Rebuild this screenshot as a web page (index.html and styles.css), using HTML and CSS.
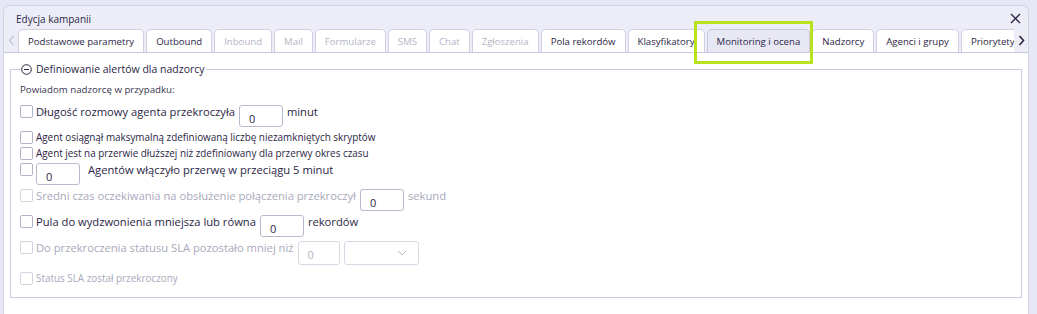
FILE: index.html
```html
<!DOCTYPE html>
<html lang="pl">
<head>
  <meta charset="UTF-8">
  <title>Edycja kampanii</title>
  <link rel="stylesheet" href="styles.css">
</head>
<body>

<div class="dialog">
  <div class="dialog-head">
    <span class="dialog-title">Edycja kampanii</span>
    <button class="close" aria-label="Zamknij">
      <svg width="11" height="11" viewBox="0 0 11 11"><path d="M1 1 L10 10 M10 1 L1 10" stroke="#2b2645" stroke-width="1.3" fill="none"/></svg>
    </button>
  </div>

  <div class="tabbar">
    <span class="arrow arrow-left">
      <svg width="7" height="11" viewBox="0 0 7 11"><path d="M5.5 1 L1.5 5.5 L5.5 10" stroke="#c3c3d3" stroke-width="1.2" fill="none"/></svg>
    </span>
    <div class="tabs">
      <div class="tab">Podstawowe parametry</div>
      <div class="tab">Outbound</div>
      <div class="tab disabled">Inbound</div>
      <div class="tab disabled">Mail</div>
      <div class="tab disabled">Formularze</div>
      <div class="tab disabled">SMS</div>
      <div class="tab disabled">Chat</div>
      <div class="tab disabled">Zgłoszenia</div>
      <div class="tab">Pola rekordów</div>
      <div class="tab">Klasyfikatory</div>
      <div class="tab active">Monitoring i ocena</div>
      <div class="tab">Nadzorcy</div>
      <div class="tab">Agenci i grupy</div>
      <div class="tab">Priorytety kampanii</div>
    </div>
    <span class="arrow arrow-right">
      <svg width="7" height="11" viewBox="0 0 7 11"><path d="M1.5 1 L5.5 5.5 L1.5 10" stroke="#2b2645" stroke-width="1.6" fill="none"/></svg>
    </span>
  </div>

  <div class="dialog-body">
    <fieldset class="group">
      <legend>
        <svg class="toggle" width="11" height="11" viewBox="0 0 11 11"><circle cx="5.5" cy="5.5" r="4.8" stroke="#2b2645" stroke-width="1" fill="none"/><path d="M3 5.5 H8" stroke="#2b2645" stroke-width="1"/></svg>
        Definiowanie alertów dla nadzorcy
      </legend>

      <p class="intro">Powiadom nadzorcę w przypadku:</p>

      <div class="row">
        <span class="check"></span>
        <span class="label big">Długość rozmowy agenta przekroczyła</span>
        <span class="field">0</span>
        <span class="label big">minut</span>
      </div>

      <div class="row small-row">
        <span class="check"></span>
        <span class="label small">Agent osiągnął maksymalną zdefiniowaną liczbę niezamkniętych skryptów</span>
      </div>

      <div class="row small-row">
        <span class="check"></span>
        <span class="label small">Agent jest na przerwie dłuższej niż zdefiniowany dla przerwy okres czasu</span>
      </div>

      <div class="row">
        <span class="check"></span>
        <span class="field first">0</span>
        <span class="label big">Agentów włączyło przerwę w przeciągu 5 minut</span>
      </div>

      <div class="row off">
        <span class="check"></span>
        <span class="label big">Sredni czas oczekiwania na obsłużenie połączenia przekroczył</span>
        <span class="field live">0</span>
        <span class="label big">sekund</span>
      </div>

      <div class="row">
        <span class="check"></span>
        <span class="label big">Pula do wydzwonienia mniejsza lub równa</span>
        <span class="field">0</span>
        <span class="label big">rekordów</span>
      </div>

      <div class="row off tall">
        <span class="check"></span>
        <span class="label big">Do przekroczenia statusu SLA pozostało mniej niż</span>
        <span class="field">0</span>
        <span class="select">
          <svg width="10" height="6" viewBox="0 0 10 6"><path d="M1 1 L5 5 L9 1" stroke="#b9b9c9" stroke-width="1" fill="none"/></svg>
        </span>
      </div>

      <div class="row small-row off last">
        <span class="check"></span>
        <span class="label small">Status SLA został przekroczony</span>
      </div>
    </fieldset>
  </div>
</div>

<div class="highlight"></div>

</body>
</html>
```

FILE: styles.css
```css
* {
  box-sizing: border-box;
}

body {
  margin: 0;
  background: #e7e7f5;
  font-family: "Open Sans", "DejaVu Sans", sans-serif;
  color: #2b2645;
  overflow: hidden;
}

.dialog {
  margin: 5px 8px 0 3px;
  height: 320px;
  background: #ededf8;
  border: 1px solid #d2d2e6;
  border-bottom: none;
  border-radius: 6px 6px 0 0;
  display: flex;
  flex-direction: column;
}

.dialog-head {
  height: 23px;
  display: flex;
  align-items: center;
  justify-content: space-between;
  padding: 2px 6px 0 12px;
}

.dialog-title {
  font-size: 10px;
}

.close {
  border: none;
  background: none;
  padding: 0;
  width: 14px;
  height: 14px;
  display: flex;
  align-items: center;
  justify-content: center;
}

.tabbar {
  height: 24px;
  display: flex;
  align-items: flex-end;
  border-bottom: 1px solid #c9c9df;
}

.arrow {
  width: 14px;
  height: 23px;
  display: flex;
  align-items: center;
  justify-content: center;
  flex: none;
}

.tabs {
  flex: 1;
  min-width: 0;
  display: flex;
  gap: 2px;
  overflow: hidden;
  align-items: flex-end;
}

.tab {
  flex: none;
  height: 23px;
  padding: 0 9px;
  display: flex;
  align-items: center;
  font-size: 9.6px;
  background: #ffffff;
  border: 1px solid #d0d0e3;
  border-bottom: none;
  border-radius: 5px 5px 0 0;
  white-space: nowrap;
}

.tab.disabled {
  color: #b4b4c4;
}

.tab.active {
  background: #e8e8f5;
  border-color: #c6c6dc;
}

.dialog-body {
  flex: 1;
  background: #ffffff;
  padding: 9px 6px 0 6px;
}

.group {
  margin: 0;
  height: 236px;
  border: 1px solid #cacae0;
  padding: 6px 9px 0 9px;
}

.group legend {
  padding: 0 1px 0 0;
  margin-left: 1px;
  font-size: 10.5px;
  display: flex;
  align-items: center;
  gap: 4px;
}

.intro {
  margin: 1px 0 9px 0;
  font-size: 9.7px;
  color: #3a3552;
}

.row {
  display: flex;
  align-items: flex-start;
  gap: 4px;
  margin-bottom: 4px;
}

.row.small-row {
  margin-bottom: 3px;
}

.row.tall {
  margin-bottom: 7px;
}

.check {
  flex: none;
  width: 13px;
  height: 13px;
  border: 1px solid #b3b3c8;
  border-radius: 2px;
  background: #ffffff;
  margin-right: -1px;
}

.label {
  white-space: nowrap;
}

.label.big {
  font-size: 11.2px;
  line-height: 14px;
}

.label.small {
  font-size: 9.9px;
  line-height: 13px;
}

.field {
  flex: none;
  width: 44px;
  height: 22px;
  border: 1px solid #b9b9cc;
  border-radius: 3px;
  padding: 6px 0 0 9px;
  font-size: 11px;
  line-height: 14px;
  color: #2b2645;
  background: #fff;
}

.field.first {
  margin-left: 0;
  margin-right: 4px;
}

.row.off .check {
  border-color: #d4d4e0;
}

.row.off .label {
  color: #a9a9bb;
}

.row.off .field {
  border-color: #d8d8e4;
  color: #b0b0c0;
  height: 24px;
  width: 42px;
}

.row.off .field.live {
  border-color: #b9b9cc;
  color: #2b2645;
  height: 22px;
  width: 44px;
}

.select {
  flex: none;
  width: 75px;
  height: 24px;
  border: 1px solid #d8d8e4;
  border-radius: 3px;
  display: flex;
  align-items: center;
  justify-content: flex-end;
  padding-right: 11px;
}

.highlight {
  position: absolute;
  left: 694px;
  top: 21px;
  width: 119px;
  height: 43px;
  border: 3px solid #b8e31c;
}
```
